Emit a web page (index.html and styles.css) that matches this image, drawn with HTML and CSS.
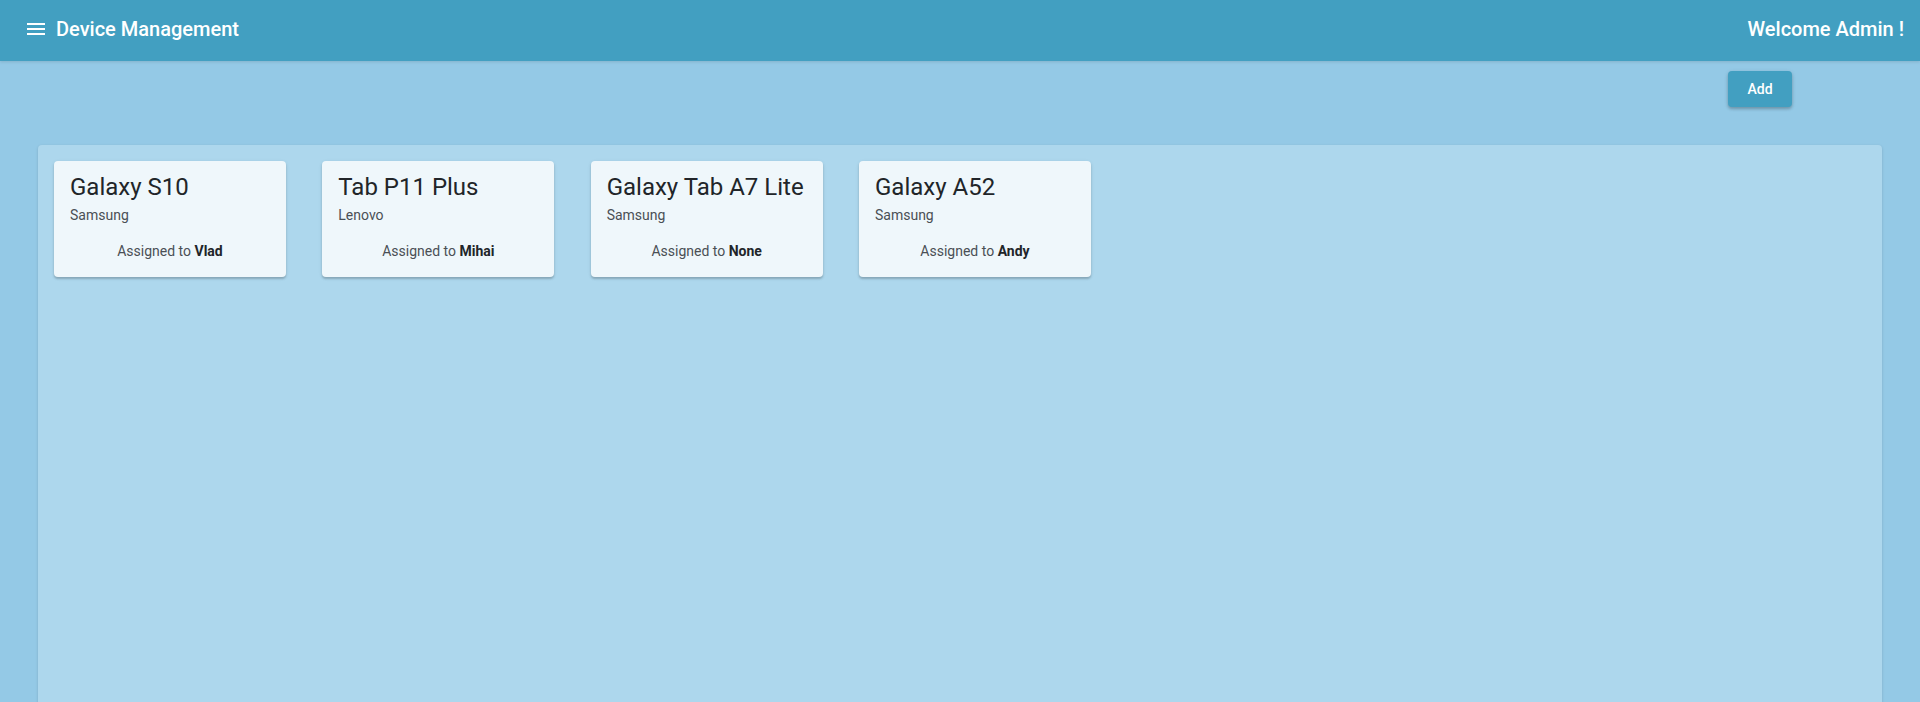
FILE: index.html
```html
<!DOCTYPE html>
<html>
<head>
<meta charset="utf-8">
<title>Device Management</title>
<link rel="stylesheet" href="styles.css">
</head>
<body>
<header class="toolbar">
  <div class="brand">
    <svg class="menu-icon" viewBox="0 0 24 24" width="24" height="24"><path fill="#fff" d="M3 18h18v-2H3v2zm0-5h18v-2H3v2zm0-7v2h18V6H3z"/></svg>
    <span class="title">Device Management</span>
  </div>
  <span class="welcome">Welcome Admin !</span>
</header>
<div class="actions">
  <button class="add-btn">Add</button>
</div>
<main class="panel">
  <div class="card">
    <div class="card-title">Galaxy S10</div>
    <div class="card-sub">Samsung</div>
    <div class="card-assign">Assigned to <b>Vlad</b></div>
  </div>
  <div class="card">
    <div class="card-title">Tab P11 Plus</div>
    <div class="card-sub">Lenovo</div>
    <div class="card-assign">Assigned to <b>Mihai</b></div>
  </div>
  <div class="card">
    <div class="card-title">Galaxy Tab A7 Lite</div>
    <div class="card-sub">Samsung</div>
    <div class="card-assign">Assigned to <b>None</b></div>
  </div>
  <div class="card">
    <div class="card-title">Galaxy A52</div>
    <div class="card-sub">Samsung</div>
    <div class="card-assign">Assigned to <b>Andy</b></div>
  </div>
</main>
</body>
</html>
```
FILE: styles.css
```css
html, body {
  margin: 0;
  padding: 0;
}
body {
  background: #94c9e6;
  font-family: Roboto, "Liberation Sans", sans-serif;
  overflow: hidden;
}
.toolbar {
  height: 61px;
  background: #429fc1;
  color: #fff;
  display: flex;
  align-items: center;
  justify-content: space-between;
  padding: 0 16px 3px 24px;
  box-sizing: border-box;
  box-shadow: 0 1px 3px rgba(0,0,0,0.12);
}
.brand {
  display: flex;
  align-items: center;
  gap: 8px;
}
.menu-icon {
  display: block;
  margin-top: -1px;
}
.title, .welcome {
  font-size: 20px;
  font-weight: 500;
  letter-spacing: 0;
}
.actions {
  display: flex;
  justify-content: flex-end;
  padding: 10px 128px 0 0;
  height: 36px;
}
.add-btn {
  width: 64px;
  height: 36px;
  border: none;
  border-radius: 4px;
  background: #429fc1;
  color: #fff;
  font-family: Roboto, "Liberation Sans", sans-serif;
  font-size: 14px;
  font-weight: 500;
  box-shadow: 0 2px 3px rgba(0,0,0,0.2), 0 1px 5px rgba(0,0,0,0.1);
  cursor: pointer;
}
.panel {
  margin: 38px 38px 0 38px;
  min-height: 600px;
  background: #add7ed;
  border-radius: 4px;
  box-shadow: 0 1px 3px rgba(0,0,0,0.15);
  padding: 16px;
  box-sizing: border-box;
  display: flex;
  align-items: flex-start;
  gap: 36.33px;
}
.card {
  width: 232px;
  height: 116px;
  box-sizing: border-box;
  background: #eff7fb;
  border-radius: 4px;
  box-shadow: 0 2px 2px rgba(0,0,0,0.18), 0 1px 4px rgba(0,0,0,0.08);
  padding: 10px 16px 0 16px;
}
.card-title {
  font-size: 24px;
  line-height: 32px;
  color: #212529;
}
.card-sub {
  font-size: 14px;
  line-height: 20px;
  color: #4a4f55;
  margin-top: 2px;
}
.card-assign {
  font-size: 14px;
  line-height: 20px;
  color: #4a4f55;
  text-align: center;
  margin-top: 16px;
}
.card-assign b {
  font-weight: 700;
  color: #212529;
}
```
